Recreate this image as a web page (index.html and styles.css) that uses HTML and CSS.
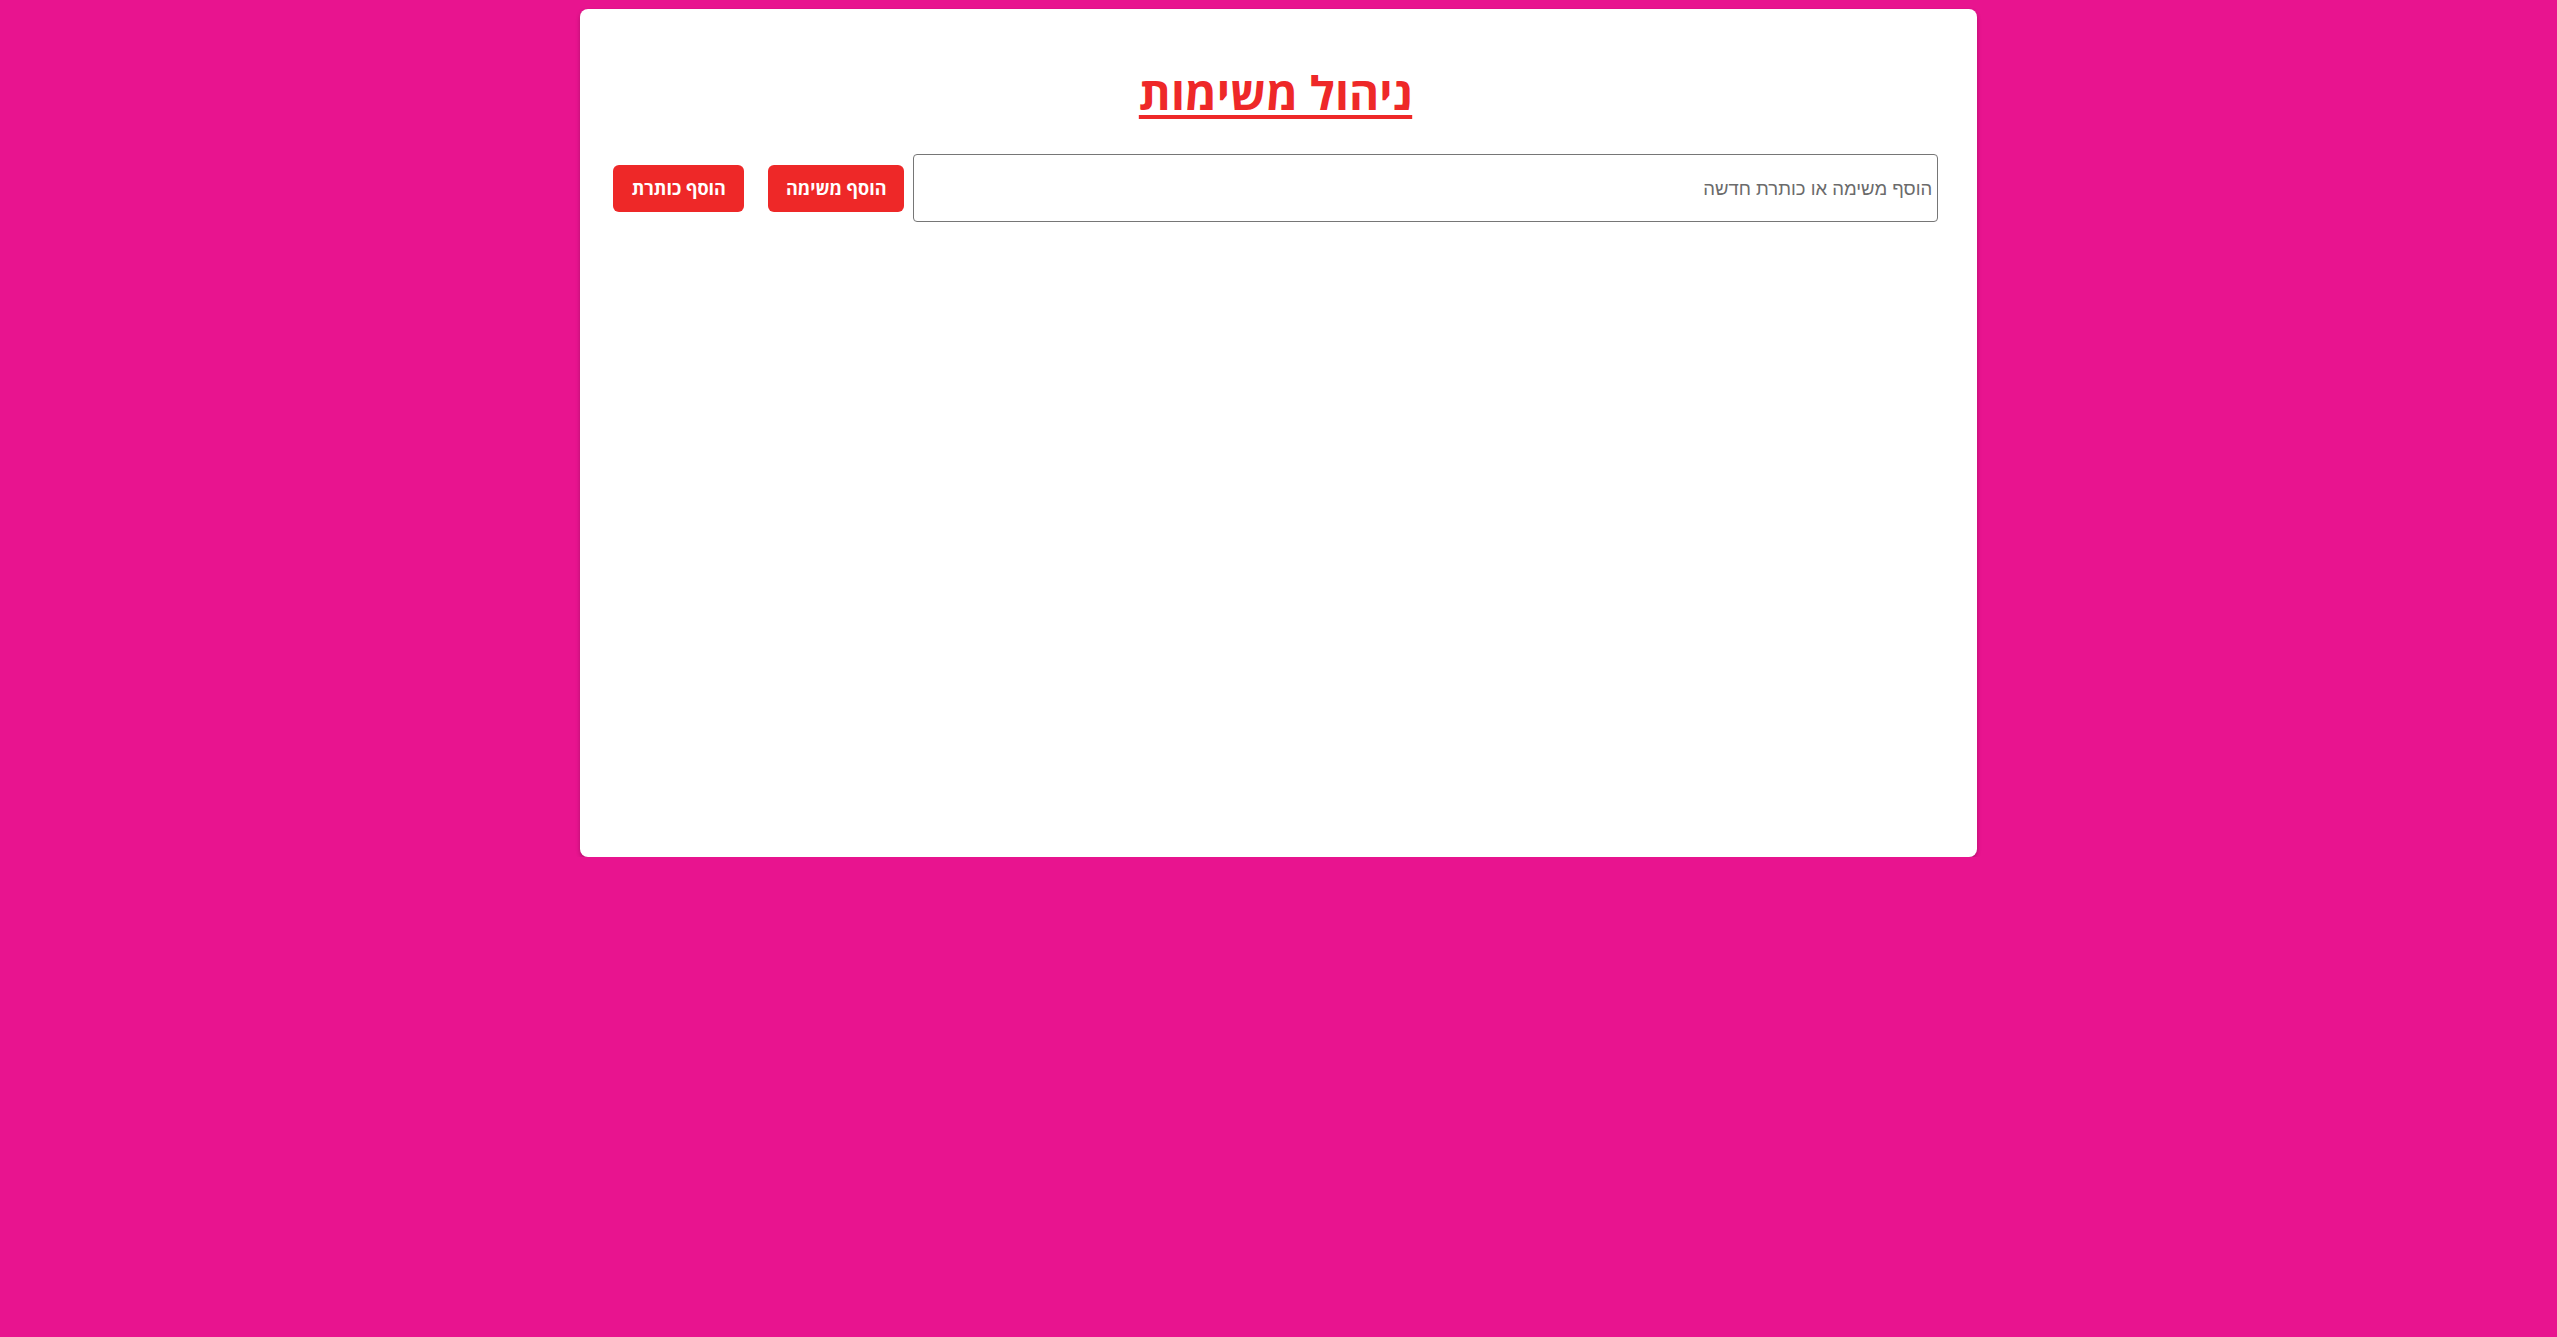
FILE: index.html
```html
<!DOCTYPE html>
<html lang="he" dir="rtl">
<head>
<meta charset="utf-8">
<title>ניהול משימות</title>
<link rel="stylesheet" href="styles.css">
</head>
<body>
<main class="card">
  <h1 class="title">ניהול משימות</h1>
  <div class="form">
    <input class="task-input" type="text" placeholder="הוסף משימה או כותרת חדשה">
    <button class="btn btn-task">הוסף משימה</button>
    <button class="btn btn-title">הוסף כותרת</button>
  </div>
</main>
</body>
</html>
```
FILE: styles.css
```css
html, body {
  background: #e8148f;
}
body {
  margin: 8px;
  direction: rtl;
  font-family: "Open Sans", "DejaVu Sans", sans-serif;
}
.card {
  width: 55%;
  height: 848px;
  margin: 1px auto 0;
  background: #fff;
  border-radius: 8px;
  box-shadow: 0 2px 4px rgba(0, 0, 0, 0.25);
  box-sizing: border-box;
  padding: 0 39px 0 33px;
  overflow: hidden;
}
.title {
  margin: 56px 0 0;
  height: 89px;
  text-align: center;
  font-size: 46px;
  line-height: 1.2;
  font-weight: 700;
  color: #ee2828;
  text-decoration: underline;
  text-decoration-thickness: 4px;
  text-underline-offset: 5px;
}
.form {
  display: flex;
  align-items: center;
}
.task-input {
  width: 1025px;
  height: 68px;
  box-sizing: border-box;
  border: 1px solid #767676;
  border-radius: 4px;
  padding: 2px 5px 0;
  font-family: "Liberation Sans", "DejaVu Sans", sans-serif;
  font-size: 18.5px;
  color: #333;
  margin-left: 9px;
}
.task-input::placeholder {
  color: #6b6b6b;
}
.btn {
  height: 47px;
  border: none;
  border-radius: 6px;
  background: #ee2828;
  color: #fff;
  font-family: "Open Sans", "DejaVu Sans", sans-serif;
  font-size: 18px;
  font-weight: 700;
  padding: 0;
  white-space: nowrap;
  cursor: pointer;
}
.btn-task {
  width: 136px;
  margin-left: 24px;
}
.btn-title {
  width: 131px;
}
```
